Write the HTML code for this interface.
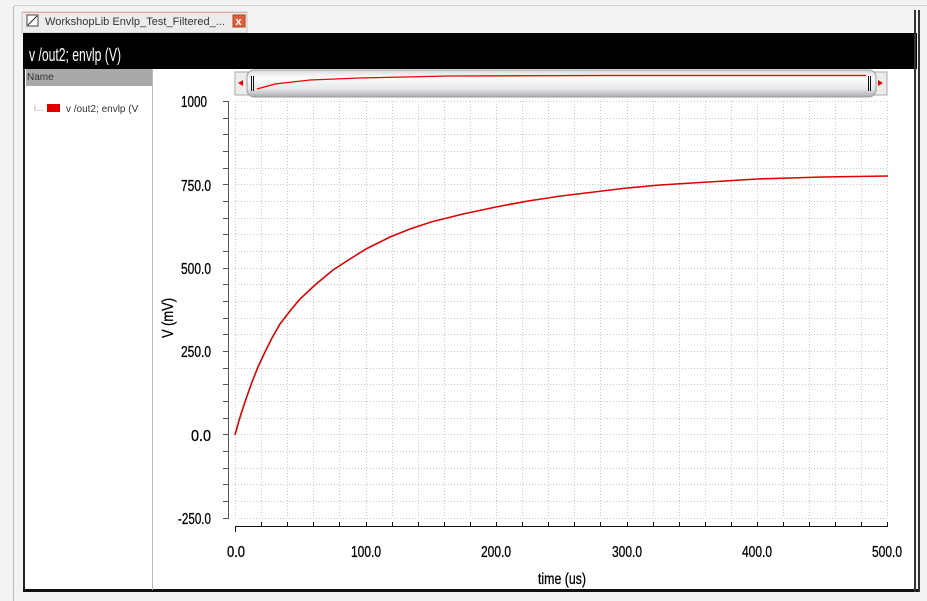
<!DOCTYPE html>
<html><head><meta charset="utf-8"><style>
body{margin:0;width:927px;height:601px;background:#f4f4f4;overflow:hidden;font-family:"Liberation Sans",sans-serif}
</style></head><body>
<svg width="927" height="601" xmlns="http://www.w3.org/2000/svg" style="position:absolute;left:0;top:0">
<defs>
<linearGradient id="sb" x1="0" y1="0" x2="0" y2="1">
<stop offset="0" stop-color="#d8dadd"/><stop offset="0.3" stop-color="#fdfdfd"/><stop offset="0.7" stop-color="#e6e7e9"/><stop offset="1" stop-color="#a9abaf"/>
</linearGradient>
</defs>
<rect width="927" height="601" fill="#f3f3f3"/>
<line x1="13.5" y1="6" x2="13.5" y2="601" stroke="#b8b8b8"/>
<line x1="14" y1="5.5" x2="927" y2="5.5" stroke="#d0d0d0"/>
<rect x="22" y="12" width="225" height="21" fill="#ececec" stroke="#c8c8c8"/>
<line x1="22" y1="12.5" x2="247" y2="12.5" stroke="#e8a8a0"/>
<rect x="27" y="15" width="11" height="11" fill="#fff" stroke="#444"/>
<line x1="28" y1="25" x2="37" y2="16" stroke="#222"/>
<text x="45" y="25" font-size="11" fill="#333" textLength="180">WorkshopLib Envlp_Test_Filtered_...</text>
<rect x="233" y="15" width="12" height="12" fill="#e0603e" stroke="#b04020"/>
<text x="235.5" y="25" font-size="11" fill="#fff" font-weight="bold">x</text>
<rect x="23" y="33" width="2" height="558" fill="#222"/>
<rect x="23" y="33" width="894" height="36" fill="#000"/>
<text x="29" y="61" font-size="18" fill="#fff" textLength="92" lengthAdjust="spacingAndGlyphs">v /out2; envlp (V)</text>
<rect x="25" y="69" width="890" height="521" fill="#fff"/>
<rect x="23" y="589" width="897" height="3" fill="#111"/>
<rect x="914" y="10" width="2" height="582" fill="#333"/>
<rect x="918" y="10" width="2" height="582" fill="#333"/>
<rect x="26" y="69" width="126" height="17" fill="#a9a9a9"/>
<text x="27" y="80" font-size="10" fill="#333">Name</text>
<line x1="152.5" y1="69" x2="152.5" y2="590" stroke="#bbb"/>
<text x="34" y="111" font-size="9" fill="#999">i...</text>
<rect x="47" y="104" width="13" height="8" fill="#e00000"/>
<text x="66" y="112" font-size="10" fill="#333">v /out2; envlp (V</text>
<rect x="235" y="72" width="13" height="23" fill="#ececec" stroke="#aaa"/>
<polygon points="238,83 243,80 243,86" fill="#e00"/>
<rect x="874" y="72" width="13" height="23" fill="#ececec" stroke="#aaa"/>
<polygon points="883,83 878,80 878,86" fill="#e00"/>
<rect x="247" y="70" width="629" height="27" rx="7" fill="url(#sb)" stroke="#9a9ca0"/>
<line x1="251.5" y1="76" x2="251.5" y2="91" stroke="#111"/><line x1="253.5" y1="76" x2="253.5" y2="91" stroke="#111"/>
<line x1="868.5" y1="76" x2="868.5" y2="91" stroke="#111"/><line x1="870.5" y1="76" x2="870.5" y2="91" stroke="#111"/>
<polyline points="257,89 275,84 310,80 360,78 450,76 600,75.5 866,75.5" fill="none" stroke="#e00" stroke-width="1.3"/>
<g stroke="#c8c8c8" stroke-dasharray="1,2" stroke-width="1">
<line x1="235" y1="101.5" x2="888" y2="101.5"/><line x1="235" y1="118.5" x2="888" y2="118.5"/><line x1="235" y1="134.5" x2="888" y2="134.5"/><line x1="235" y1="151.5" x2="888" y2="151.5"/><line x1="235" y1="168.5" x2="888" y2="168.5"/><line x1="235" y1="184.5" x2="888" y2="184.5"/><line x1="235" y1="201.5" x2="888" y2="201.5"/><line x1="235" y1="218.5" x2="888" y2="218.5"/><line x1="235" y1="234.5" x2="888" y2="234.5"/><line x1="235" y1="251.5" x2="888" y2="251.5"/><line x1="235" y1="268.5" x2="888" y2="268.5"/><line x1="235" y1="284.5" x2="888" y2="284.5"/><line x1="235" y1="301.5" x2="888" y2="301.5"/><line x1="235" y1="318.5" x2="888" y2="318.5"/><line x1="235" y1="334.5" x2="888" y2="334.5"/><line x1="235" y1="351.5" x2="888" y2="351.5"/><line x1="235" y1="368.5" x2="888" y2="368.5"/><line x1="235" y1="384.5" x2="888" y2="384.5"/><line x1="235" y1="401.5" x2="888" y2="401.5"/><line x1="235" y1="418.5" x2="888" y2="418.5"/><line x1="235" y1="434.5" x2="888" y2="434.5"/><line x1="235" y1="451.5" x2="888" y2="451.5"/><line x1="235" y1="468.5" x2="888" y2="468.5"/><line x1="235" y1="484.5" x2="888" y2="484.5"/><line x1="235" y1="501.5" x2="888" y2="501.5"/><line x1="235" y1="518.5" x2="888" y2="518.5"/>
<line x1="235.5" y1="101" x2="235.5" y2="518"/><line x1="261.5" y1="101" x2="261.5" y2="518"/><line x1="287.5" y1="101" x2="287.5" y2="518"/><line x1="313.5" y1="101" x2="313.5" y2="518"/><line x1="339.5" y1="101" x2="339.5" y2="518"/><line x1="366.5" y1="101" x2="366.5" y2="518"/><line x1="392.5" y1="101" x2="392.5" y2="518"/><line x1="418.5" y1="101" x2="418.5" y2="518"/><line x1="444.5" y1="101" x2="444.5" y2="518"/><line x1="470.5" y1="101" x2="470.5" y2="518"/><line x1="496.5" y1="101" x2="496.5" y2="518"/><line x1="522.5" y1="101" x2="522.5" y2="518"/><line x1="548.5" y1="101" x2="548.5" y2="518"/><line x1="574.5" y1="101" x2="574.5" y2="518"/><line x1="600.5" y1="101" x2="600.5" y2="518"/><line x1="627.5" y1="101" x2="627.5" y2="518"/><line x1="653.5" y1="101" x2="653.5" y2="518"/><line x1="679.5" y1="101" x2="679.5" y2="518"/><line x1="705.5" y1="101" x2="705.5" y2="518"/><line x1="731.5" y1="101" x2="731.5" y2="518"/><line x1="757.5" y1="101" x2="757.5" y2="518"/><line x1="783.5" y1="101" x2="783.5" y2="518"/><line x1="809.5" y1="101" x2="809.5" y2="518"/><line x1="835.5" y1="101" x2="835.5" y2="518"/><line x1="861.5" y1="101" x2="861.5" y2="518"/><line x1="887.5" y1="101" x2="887.5" y2="518"/>
</g>
<g stroke="#555" stroke-width="1">
<line x1="228.5" y1="101" x2="228.5" y2="519"/>
<path d="M223 101.5h5M223 118.5h5M223 134.5h5M223 151.5h5M223 168.5h5M223 184.5h5M223 201.5h5M223 218.5h5M223 234.5h5M223 251.5h5M223 268.5h5M223 284.5h5M223 301.5h5M223 318.5h5M223 334.5h5M223 351.5h5M223 368.5h5M223 384.5h5M223 401.5h5M223 418.5h5M223 434.5h5M223 451.5h5M223 468.5h5M223 484.5h5M223 501.5h5M223 518.5h5"/>
<line x1="235" y1="526.5" x2="888" y2="526.5" stroke="#111"/>
<path d="M235.5 527v5M261.5 527v-5M287.5 527v-5M313.5 527v-5M339.5 527v-5M366.5 527v-5M392.5 527v-5M418.5 527v-5M444.5 527v-5M470.5 527v-5M496.5 527v-5M522.5 527v-5M548.5 527v-5M574.5 527v-5M600.5 527v-5M627.5 527v-5M653.5 527v-5M679.5 527v-5M705.5 527v-5M731.5 527v-5M757.5 527v-5M783.5 527v-5M809.5 527v-5M835.5 527v-5M861.5 527v-5M887.5 527v-5" stroke="#111"/>
</g>
<g font-size="16" fill="#000" stroke="#000" stroke-width="0.3" text-anchor="end">
<text x="207" y="107" textLength="26" lengthAdjust="spacingAndGlyphs">1000</text>
<text x="211" y="191" textLength="30" lengthAdjust="spacingAndGlyphs">750.0</text>
<text x="211" y="274" textLength="30" lengthAdjust="spacingAndGlyphs">500.0</text>
<text x="211" y="357" textLength="30" lengthAdjust="spacingAndGlyphs">250.0</text>
<text x="211" y="441" textLength="20" lengthAdjust="spacingAndGlyphs">0.0</text>
<text x="211" y="524" textLength="33" lengthAdjust="spacingAndGlyphs">-250.0</text>
</g>
<g font-size="16" fill="#000" stroke="#000" stroke-width="0.3" text-anchor="middle">
<text x="236" y="557" textLength="18" lengthAdjust="spacingAndGlyphs">0.0</text>
<text x="366" y="557" textLength="30" lengthAdjust="spacingAndGlyphs">100.0</text>
<text x="496" y="557" textLength="30" lengthAdjust="spacingAndGlyphs">200.0</text>
<text x="627" y="557" textLength="30" lengthAdjust="spacingAndGlyphs">300.0</text>
<text x="757" y="557" textLength="30" lengthAdjust="spacingAndGlyphs">400.0</text>
<text x="887" y="557" textLength="30" lengthAdjust="spacingAndGlyphs">500.0</text>
<text x="562" y="584" textLength="48" lengthAdjust="spacingAndGlyphs">time (us)</text>
</g>
<text transform="translate(173,318) rotate(-90)" font-size="16" stroke="#000" stroke-width="0.3" text-anchor="middle" textLength="40" lengthAdjust="spacingAndGlyphs">V (mV)</text>
<polyline fill="none" stroke="#e00000" stroke-width="1.6" points="235,435 238,424 241,414 246,399 252,382 258,367 265,352 272,338 280,324 290,311 300,299 315,285 333,270 350,259 366,249 390,237 410,229 431,222 463,214 496,207 528,201 561,196 594,192 627,188 660,185 692,183 725,181 757,179 790,178 823,177 855,176.5 888,176"/>
</svg>
</body></html>
